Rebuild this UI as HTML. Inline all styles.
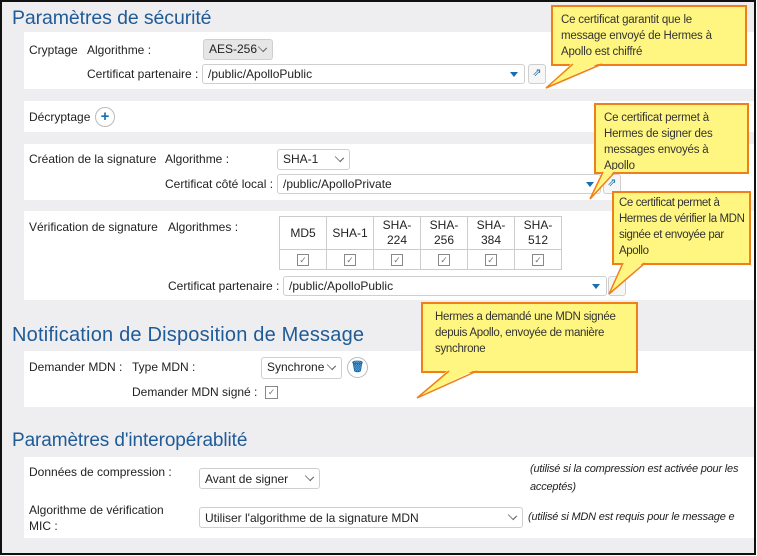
<!DOCTYPE html>
<html><head><meta charset="utf-8"><style>
*{margin:0;padding:0;box-sizing:border-box}
body{width:757px;height:556px;overflow:hidden;background:#fff;font-family:"Liberation Sans",sans-serif;font-size:12px;color:#222}
#f{position:absolute;left:0;top:0;width:756px;height:555px;border:2px solid #111;background:#eeeef1;overflow:hidden}
.a{position:absolute;white-space:nowrap}
.p{position:absolute;left:22px;width:730px;background:#fff}
.h{position:absolute;left:10px;font-size:19px;color:#1f5b97;white-space:nowrap;letter-spacing:-0.1px}
.s{position:absolute;border:1px solid #cfcfcf;border-radius:3px;background:#fff;padding:2px 5px;font-size:12px;white-space:nowrap}
.s .v{position:absolute;right:6px;top:4px;width:7px;height:7px;border-right:1px solid #666;border-bottom:1px solid #666;transform:rotate(45deg) scale(1.1,0.8)}
.s .t{position:absolute;right:6px;top:7px;width:0;height:0;border-left:4px solid transparent;border-right:4px solid transparent;border-top:5px solid #1a6fb0}
.b{position:absolute;border:1px solid #cfcfcf;border-radius:3px;background:#f6f6f6;color:#1a6fb0;font-size:11px;text-align:center;line-height:17px}
.c{position:absolute;width:13px;height:13px;border:1px solid #888;font-size:9px;color:#777;line-height:11px;text-align:center}
.ci{display:inline-block;width:12px;height:12px;border:1px solid #888;font-size:9px;color:#777;line-height:10px;text-align:center;vertical-align:middle}
.r{position:absolute;border:1px solid #bbb;border-radius:50%;color:#1a6fb0;text-align:center;font-weight:bold;background:#fff}
table{position:absolute;border-collapse:collapse}
td{border:1px solid #ccc;width:47px;text-align:center;font-size:12px;line-height:15px}
.i{position:absolute;font-style:italic;font-size:11px;white-space:nowrap;letter-spacing:-0.2px}
.cl{position:absolute;background:#fff682;border:2px solid #f07f1a;padding:5px 6px 0 8px;font-size:11.5px;line-height:16px;color:#333;letter-spacing:-0.2px}
svg{position:absolute;left:0;top:0}
</style></head><body><div id="f">
<div class="h" style="top:5px;font-size:19.5px">Paramètres de sécurité</div>
<div class="p" style="top:30px;height:57px"></div>
<div class="p" style="top:99px;height:31px"></div>
<div class="p" style="top:142px;height:56px"></div>
<div class="p" style="top:209px;height:89px"></div>
<div class="h" style="top:322px;font-size:20px;letter-spacing:0.2px">Notification de Disposition de Message</div>
<div class="p" style="top:349px;height:56px"></div>
<div class="h" style="top:428px">Paramètres d'interopérablité</div>
<div class="p" style="top:455px;height:81px"></div>

<div class="a" style="left:27px;top:41px">Cryptage</div>
<div class="a" style="left:85px;top:41px">Algorithme :</div>
<div class="s" style="left:201px;top:37px;width:70px;height:21px;background:#e6e6e6">AES-256<span class="v"></span></div>
<div class="a" style="left:85px;top:65px">Certificat partenaire :</div>
<div class="s" style="left:200px;top:62px;width:323px;height:20px">/public/ApolloPublic<span class="t"></span></div>
<div class="b" style="left:526px;top:62px;width:18px;height:20px">⇗</div>

<div class="a" style="left:27px;top:108px">Décryptage</div>
<div class="r" style="left:93px;top:105px;width:20px;height:20px;line-height:18px;font-size:15px">+</div>

<div class="a" style="left:27px;top:150px">Création de la signature</div>
<div class="a" style="left:163px;top:150px">Algorithme :</div>
<div class="s" style="left:275px;top:147px;width:73px;height:21px">SHA-1<span class="v"></span></div>
<div class="a" style="left:163px;top:175px">Certificat côté local :</div>
<div class="s" style="left:275px;top:172px;width:324px;height:20px">/public/ApolloPrivate<span class="t"></span></div>
<div class="b" style="left:601px;top:172px;width:18px;height:20px">⇗</div>

<div class="a" style="left:27px;top:218px">Vérification de signature</div>
<div class="a" style="left:166px;top:218px">Algorithmes :</div>
<table style="left:277px;top:214px"><tr style="height:33px"><td>MD5</td><td>SHA-1</td><td>SHA-<br>224</td><td>SHA-<br>256</td><td>SHA-<br>384</td><td>SHA-<br>512</td></tr>
<tr style="height:20px"><td><span class="ci">✓</span></td><td><span class="ci">✓</span></td><td><span class="ci">✓</span></td><td><span class="ci">✓</span></td><td><span class="ci">✓</span></td><td><span class="ci">✓</span></td></tr></table>
<div class="a" style="left:166px;top:277px">Certificat partenaire :</div>
<div class="s" style="left:281px;top:274px;width:324px;height:20px">/public/ApolloPublic<span class="t"></span></div>
<div class="b" style="left:606px;top:274px;width:18px;height:20px">⇗</div>

<div class="a" style="left:27px;top:358px">Demander MDN :</div>
<div class="a" style="left:130px;top:358px">Type MDN :</div>
<div class="s" style="left:259px;top:355px;width:81px;height:22px">Synchrone<span class="v"></span></div>
<div class="r" style="left:345px;top:355px;width:21px;height:21px;line-height:19px;font-size:11px">🗑</div>
<div class="a" style="left:130px;top:383px">Demander MDN signé :</div>
<div class="c" style="left:263px;top:384px">✓</div>

<div class="a" style="left:27px;top:463px">Données de compression :</div>
<div class="s" style="left:197px;top:466px;width:121px;height:21px;padding-top:3px">Avant de signer<span class="v"></span></div>
<div class="i" style="left:528px;top:461px">(utilisé si la compression est activée pour les</div>
<div class="i" style="left:528px;top:479px">acceptés)</div>
<div class="a" style="left:27px;top:501px">Algorithme de vérification</div>
<div class="a" style="left:27px;top:517px">MIC :</div>
<div class="s" style="left:197px;top:505px;width:324px;height:21px;padding-top:3px">Utiliser l'algorithme de la signature MDN<span class="v"></span></div>
<div class="i" style="left:526px;top:509px">(utilisé si MDN est requis pour le message e</div>

<div class="cl" style="left:549px;top:3px;width:196px;height:61px">Ce certificat garantit que le message envoyé de Hermes à Apollo est chiffré</div>
<div class="cl" style="left:592px;top:101px;width:155px;height:71px">Ce certificat permet à Hermes de signer des messages envoyés à Apollo</div>
<div class="cl" style="left:610px;top:189px;width:139px;height:74px;padding:2px 2px 0 5px;letter-spacing:-0.4px">Ce certificat permet à Hermes de vérifier la MDN signée et envoyée par Apollo</div>
<div class="cl" style="left:419px;top:300px;width:217px;height:71px;padding-left:12px;letter-spacing:-0.3px">Hermes a demandé une MDN signée depuis Apollo, envoyée de manière synchrone</div>
<svg width="757" height="556">
<polygon points="571,60 544,86 600,60" fill="#fff682"/><polyline points="571,62 544,86 600,62" fill="none" stroke="#f07f1a" stroke-width="1.5"/>
<polygon points="601,168 588,197 613,168" fill="#fff682"/><polyline points="601,170 588,197 613,170" fill="none" stroke="#f07f1a" stroke-width="1.5"/>
<polygon points="621,259 607,292 643,259" fill="#fff682"/><polyline points="621,261 607,292 643,261" fill="none" stroke="#f07f1a" stroke-width="1.5"/>
<polygon points="447,367 415,396 475,367" fill="#fff682"/><polyline points="447,369 415,396 475,369" fill="none" stroke="#f07f1a" stroke-width="1.5"/>
</svg>
</div></body></html>
